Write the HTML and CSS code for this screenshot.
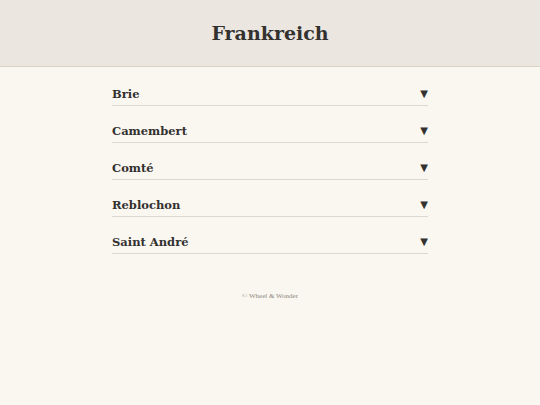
FILE: index.html
```html
<!DOCTYPE html>
<html lang="de">
<head>
<meta charset="utf-8">
<title>Frankreich</title>
<link rel="stylesheet" href="styles.css">
</head>
<body>
<header class="site-header">
  <h1 class="title">Frankreich</h1>
</header>
<main class="list">
  <div class="row"><span class="name">Brie</span><span class="arrow">▼</span></div>
  <div class="row"><span class="name">Camembert</span><span class="arrow">▼</span></div>
  <div class="row"><span class="name">Comté</span><span class="arrow">▼</span></div>
  <div class="row"><span class="name">Reblochon</span><span class="arrow">▼</span></div>
  <div class="row"><span class="name">Saint André</span><span class="arrow">▼</span></div>
</main>
<footer class="footer">© Wheel &amp; Wonder</footer>
</body>
</html>
```
FILE: styles.css
```css
html, body {
  margin: 0;
  padding: 0;
}
body {
  background: #faf7f0;
  color: #333130;
  font-family: "DejaVu Serif", "Liberation Serif", serif;
  height: 405px;
}
.site-header {
  background: #ebe6df;
  border-bottom: 1px solid #d8d2c2;
  height: 66px;
  display: flex;
  align-items: center;
  justify-content: center;
}
.title {
  margin: 0;
  font-size: 19px;
  font-weight: bold;
  color: #333130;
}
.list {
  width: 316px;
  margin: 0 auto;
  padding-top: 2px;
}
.row {
  display: flex;
  justify-content: space-between;
  align-items: center;
  padding: 16px 0 2px;
  height: 18px;
  line-height: 18px;
  border-bottom: 1px solid #dcd8d0;
}
.name {
  font-size: 11.5px;
  font-weight: bold;
}
.arrow {
  font-family: "DejaVu Sans", sans-serif;
  font-size: 10px;
}
.footer {
  text-align: center;
  font-family: "Liberation Serif", serif;
  font-size: 7px;
  line-height: 10px;
  color: #8a8680;
  margin-top: 37px;
}
```
